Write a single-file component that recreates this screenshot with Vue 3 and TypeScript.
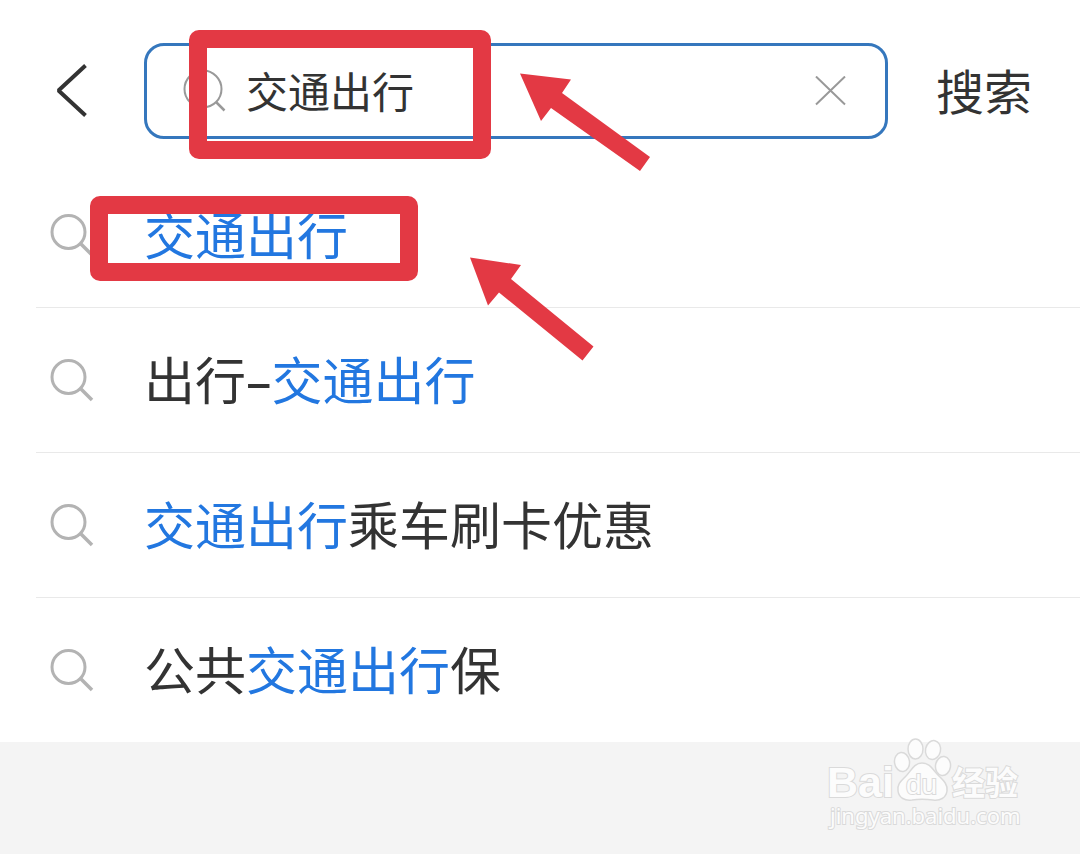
<script setup lang="ts">
import { ref } from 'vue'

interface Part {
  text: string
  match: boolean
}

const query = ref<string>('交通出行')

const suggestions: Part[][] = [
  [{ text: '交通出行', match: true }],
  [
    { text: '出行–', match: false },
    { text: '交通出行', match: true },
  ],
  [
    { text: '交通出行', match: true },
    { text: '乘车刷卡优惠', match: false },
  ],
  [
    { text: '公共', match: false },
    { text: '交通出行', match: true },
    { text: '保', match: false },
  ],
]
</script>

<template>
  <div class="page">
    <form class="header" role="search" @submit.prevent>
      <button class="back" type="button" aria-label="返回">
        <svg width="32" height="54" viewBox="0 0 32 54">
          <path d="M29.500 1.500L2.500 26.500L29.500 51.500" fill="none" stroke="#333" stroke-width="4" stroke-linejoin="bevel" />
        </svg>
      </button>
      <div class="field">
        <svg class="field-icon" width="44" height="44" viewBox="0 0 44 44" aria-hidden="true">
          <circle cx="20" cy="20" r="18.500" fill="none" stroke="#999" stroke-width="2" />
          <path d="M33 33L41.500 41.500" stroke="#999" stroke-width="2.500" />
        </svg>
        <input v-model="query" class="input" type="text" aria-label="搜索内容" />
        <button class="clear" type="button" aria-label="清除" @click="query = ''">
          <svg width="32" height="30" viewBox="0 0 32 30">
            <path d="M1 0.500L30 28.500M30 0.500L1 28.500" stroke="#999" stroke-width="2" />
          </svg>
        </button>
      </div>
      <button class="submit" type="submit">搜索</button>
    </form>

    <ul class="list">
      <li v-for="(parts, i) in suggestions" :key="i" class="item">
        <a class="link" href="#">
          <svg class="item-icon" width="44" height="44" viewBox="0 0 44 44" aria-hidden="true">
            <circle cx="18.500" cy="19" r="16.500" fill="none" stroke="#b3b3b3" stroke-width="3" />
            <path d="M30.500 30.500L42 42" stroke="#b3b3b3" stroke-width="3.500" />
          </svg>
          <span class="label"><span v-for="(p, j) in parts" :key="j" :class="{ match: p.match }">{{ p.text }}</span></span>
        </a>
      </li>
    </ul>

    <footer class="footer">
      <svg class="watermark" width="204" height="100" viewBox="0 0 204 100">
        <g fill="#fcfcfc" stroke="#dadada" stroke-width="1.500">
          <ellipse cx="78" cy="28" rx="7.500" ry="9.500" transform="rotate(-8 78 28)" />
          <ellipse cx="91.500" cy="15" rx="7.500" ry="10" />
          <ellipse cx="109" cy="16" rx="7.500" ry="9.500" transform="rotate(12 109 16)" />
          <ellipse cx="119" cy="32" rx="7.500" ry="9.500" transform="rotate(8 119 32)" />
          <path d="M98 29C90 29 87 37 82 42C77 47 73 50 74 57C75 64 81 67 88 66C94 65 102 65 109 66C116 67 122 64 123 57C124 50 119 46 114 41C109 36 106 29 98 29Z" />
        </g>
        <text class="mark brand" x="3" y="63">Bai</text>
        <text class="mark du" x="82" y="60">du</text>
        <text class="mark cn" x="128" y="61">经验</text>
        <text class="mark url" x="6" y="90">jingyan.baidu.com</text>
      </svg>
    </footer>

    <div class="frame frame-field"></div>
    <div class="frame frame-item"></div>
    <svg class="arrow arrow-field" width="130" height="98" viewBox="0 0 130 98" aria-hidden="true">
      <path d="M0 0.500L51 6.500L42 20L130 84L120 98L31 35L21 48Z" fill="#e33944" />
    </svg>
    <svg class="arrow arrow-item" width="124" height="104" viewBox="0 0 124 104" aria-hidden="true">
      <path d="M0 0.500L51 8L41 22L123.500 89.500L112.500 103.500L29 35.500L18 48.500Z" fill="#e33944" />
    </svg>
  </div>
</template>

<style>
body {
  margin: 0;
  background: #fff;
}
</style>

<style scoped>
.page {
  position: relative;
  display: flex;
  flex-direction: column;
  min-height: 100vh;
  background: #fff;
  color: #333;
  font-family: "Noto Sans CJK SC", sans-serif;
}

button {
  padding: 0;
  border: 0;
  background: none;
  color: inherit;
  font-family: inherit;
  cursor: pointer;
}

svg {
  display: block;
  flex: none;
}

.header {
  display: flex;
  align-items: center;
  padding: 43px 48px 24px 56px;
}

.back {
  width: 88px;
}

.field {
  box-sizing: border-box;
  display: flex;
  flex: 1;
  align-items: center;
  min-width: 0;
  height: 96px;
  margin-right: 48px;
  padding: 0 38px 0 36px;
  border: 3px solid #3577bd;
  border-radius: 20px;
}

.input {
  box-sizing: border-box;
  flex: 1;
  min-width: 0;
  height: 72px;
  margin-left: 19px;
  padding: 0 0 4px;
  border: 0;
  outline: 0;
  background: none;
  color: #333;
  font-family: inherit;
  font-size: 42px;
}

.submit {
  padding-bottom: 4px;
  font-size: 48px;
  line-height: 72px;
}

.list {
  margin: 0;
  padding: 0 0 0 36px;
  list-style: none;
}

.item {
  border-bottom: 1px solid #e9e9e9;
}

.item:last-child {
  border-bottom: 0;
}

.link {
  display: flex;
  align-items: center;
  height: 144px;
  padding-left: 14px;
  color: #333;
  text-decoration: none;
}

.label {
  margin-left: 50px;
  font-family: "Noto Sans", "Noto Sans CJK SC", sans-serif;
  font-size: 51px;
  line-height: 72px;
  white-space: nowrap;
}

.match {
  color: #2277e0;
}

.footer {
  position: relative;
  flex: 1;
  min-height: 111px;
  background: #f4f4f4;
}

.watermark {
  position: absolute;
  top: -8px;
  right: 52px;
}

.mark {
  fill: #fcfcfc;
  stroke: #dadada;
  stroke-width: 2px;
  paint-order: stroke;
}

.brand {
  font: bold 43px "Liberation Sans", sans-serif;
}

.du {
  font: 28px "Liberation Sans", sans-serif;
}

.cn {
  font: bold 33px "Noto Sans CJK SC", sans-serif;
}

.url {
  font: 22px "Noto Sans", sans-serif;
}

.frame {
  position: absolute;
  box-sizing: border-box;
  border: 18px solid #e33944;
  border-radius: 10px;
  pointer-events: none;
}

.frame-field {
  top: 30px;
  left: 189px;
  width: 302px;
  height: 129px;
}

.frame-item {
  top: 196px;
  left: 90px;
  width: 328px;
  height: 85px;
}

.arrow {
  position: absolute;
  pointer-events: none;
}

.arrow-field {
  top: 73px;
  left: 520px;
}

.arrow-item {
  top: 257px;
  left: 470px;
}
</style>
